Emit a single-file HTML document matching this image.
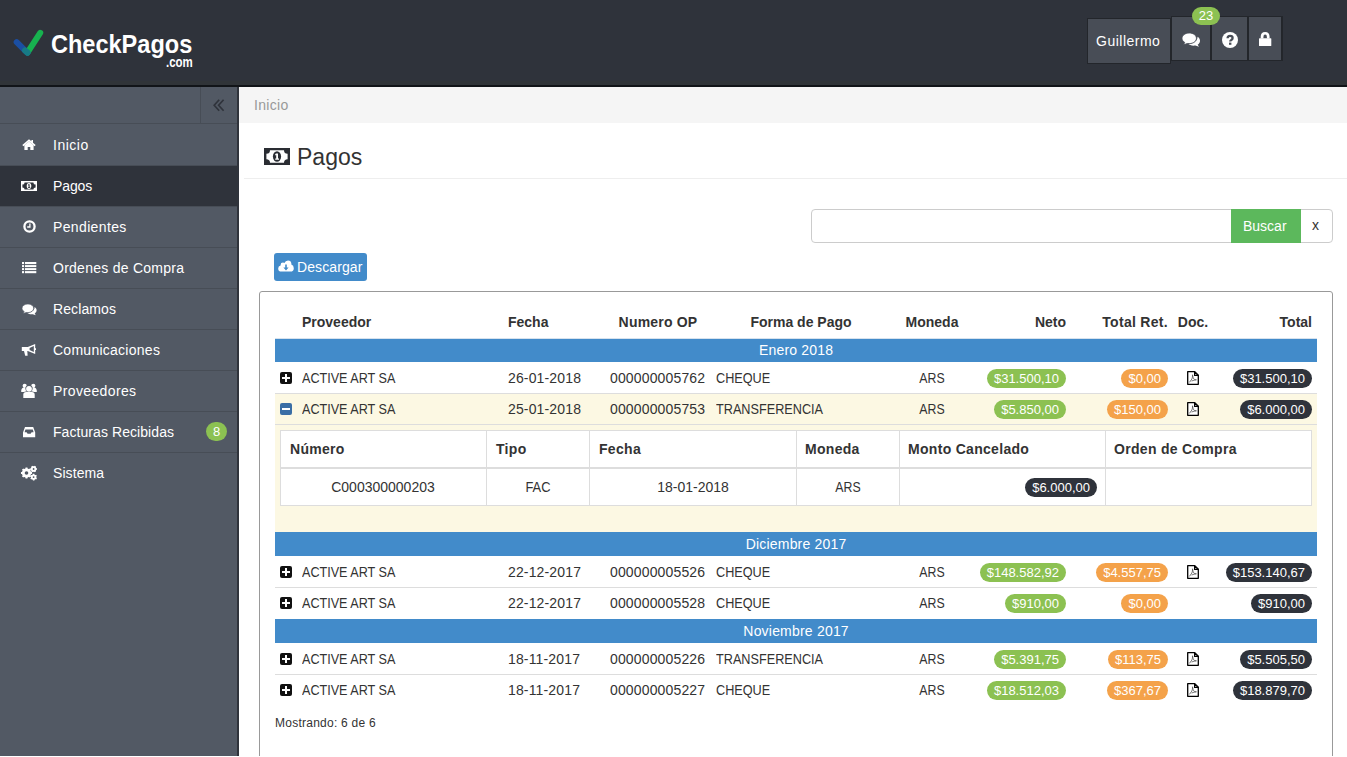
<!DOCTYPE html>
<html><head><meta charset="utf-8"><title>CheckPagos</title>
<style>
*{box-sizing:border-box;margin:0;padding:0}
html,body{width:1347px;height:757px;overflow:hidden;background:#fff;font-family:"Liberation Sans",sans-serif;font-size:14px;color:#333}
.t{position:absolute;white-space:nowrap;line-height:16px}
.b{font-weight:bold}
.bdg{position:absolute;height:19px;border-radius:10px;color:#fff;font-size:13px;line-height:19px;padding:0 7px;white-space:nowrap}
</style></head><body>
<div style="position:absolute;left:0px;top:0px;width:1347px;height:85px;background:#2f333b;"></div>
<div style="position:absolute;left:0px;top:81px;width:1347px;height:4px;background:#303438;"></div>
<div style="position:absolute;left:0px;top:85px;width:1347px;height:2px;background:#111418;"></div>
<svg style="position:absolute;left:10px;top:25px" width="40" height="35" viewBox="0 0 40 35"><line x1="6.7" y1="17.2" x2="17.4" y2="27.8" stroke="#1b4fa3" stroke-width="6" stroke-linecap="round"/><line x1="30.2" y1="7.8" x2="17.6" y2="27.4" stroke="#17b24f" stroke-width="6" stroke-linecap="round"/><line x1="15" y1="25.4" x2="17.5" y2="27.6" stroke="#177a86" stroke-width="6" stroke-linecap="round"/></svg>
<span class="t b" style="left:51px;top:29px;font-size:26px;line-height:30px;color:#fff;transform:scaleX(0.905);transform-origin:0 0">CheckPagos</span>
<span class="t b" style="left:166px;top:55px;font-size:14px;line-height:14px;color:#fff;transform:scaleX(0.82);transform-origin:0 0">.com</span>
<div style="position:absolute;left:1087px;top:18px;width:84px;height:46px;background:#23262b;"></div>
<div style="position:absolute;left:1088px;top:19px;width:82px;height:44px;background:#484d56;"></div>
<span class="t" style="left:1096px;top:33px;color:#fff;letter-spacing:0.5px">Guillermo</span>
<div style="position:absolute;left:1171px;top:16px;width:112px;height:45px;background:#23262b;"></div>
<div style="position:absolute;left:1172px;top:17px;width:38px;height:43px;background:#484d56;"></div>
<div style="position:absolute;left:1212px;top:17px;width:35px;height:43px;background:#484d56;"></div>
<div style="position:absolute;left:1249px;top:17px;width:32px;height:43px;background:#484d56;"></div>
<svg style="position:absolute;left:1182px;top:33px" width="19" height="15" viewBox="0 0 15.4 12.15"><path d="M12.6 3 C13.9 3.8 14.6 5 14.6 6.3 C14.6 7.6 13.9 8.7 12.7 9.5 L13.8 11.2 L10.8 10.2 C10.4 10.3 9.9 10.3 9.4 10.3 C7.5 10.3 5.9 9.7 5 8.8 C9.6 8.6 12.6 6.2 12.6 3Z" fill="#fff"/><path d="M5.9 0 C9.2 0 11.7 1.9 11.7 4.3 C11.7 6.7 9.2 8.6 5.9 8.6 C5.4 8.6 4.9 8.6 4.4 8.5 L1.2 9.6 L2.2 7.6 C0.8 6.8 0 5.6 0 4.3 C0 1.9 2.6 0 5.9 0Z" fill="#fff" stroke="#484d56" stroke-width="0.7"/></svg>
<svg style="position:absolute;left:1221px;top:31px" width="18" height="18" viewBox="0 0 18 18"><circle cx="9" cy="9" r="8" fill="#fff"/><path d="M6.6 7.3 Q6.6 4.8 9.1 4.8 Q11.6 4.8 11.6 6.9 Q11.6 8.1 10.3 8.9 Q9.2 9.5 9.2 10.6" fill="none" stroke="#484d56" stroke-width="2.3"/><rect x="8" y="11.6" width="2.4" height="2.2" fill="#484d56"/></svg>
<svg style="position:absolute;left:1259px;top:32px" width="13" height="15" viewBox="0 0 13 15"><path d="M1.7 6.5 V4.8 Q1.7 0 6.15 0 Q10.6 0 10.6 4.8 V6.5 H7.9 V4.9 Q7.9 2.6 6.15 2.6 Q4.4 2.6 4.4 4.9 V6.5 Z" fill="#fff"/><rect x="0" y="6.2" width="12.3" height="7.8" rx="0.6" fill="#fff"/></svg>
<span class="t" style="left:1192px;top:7px;width:28px;height:18px;border-radius:9px;background:#8cc152;color:#fff;font-size:13px;line-height:18px;text-align:center">23</span>
<div style="position:absolute;left:0px;top:87px;width:237px;height:669px;background:#525964;"></div>
<div style="position:absolute;left:237px;top:87px;width:2px;height:669px;background:#2f333b;"></div>
<div style="position:absolute;left:0px;top:123px;width:237px;height:1px;background:#474d56;"></div>
<div style="position:absolute;left:200px;top:87px;width:1px;height:36px;background:#474d56;"></div>
<svg style="position:absolute;left:213px;top:99px" width="13" height="13" viewBox="0 0 13 13"><path d="M6.2 0.8 L1.2 6.3 L6.2 11.8 M10.6 0.8 L5.6 6.3 L10.6 11.8" fill="none" stroke="#2f333b" stroke-width="1.7"/></svg>
<span class="t" style="left:53px;top:137px;color:#fff;letter-spacing:0.5px">Inicio</span>
<svg style="position:absolute;left:22px;top:139px" width="14" height="11" viewBox="0 0 14 11"><path d="M7 0.3 L0.3 6 L1.4 7.2 L7 2.4 L12.6 7.2 L13.7 6 L11 3.7 V1 H9.4 V2.3 Z" fill="#fff"/><path d="M2.4 6.2 L7 2.6 L11.6 6.2 V11 H8.3 V8 H5.7 V11 H2.4 Z" fill="#fff"/></svg>
<div style="position:absolute;left:0px;top:165px;width:237px;height:1px;background:#474d56;"></div>
<div style="position:absolute;left:0px;top:166px;width:237px;height:40px;background:#2f333b;"></div>
<span class="t" style="left:53px;top:178px;color:#fff;letter-spacing:-0.1px">Pagos</span>
<svg style="position:absolute;left:21px;top:181px" width="16" height="10" viewBox="0 0 16 10"><rect width="16" height="10" fill="#fff"/><path d="M3.6 1.4 H12.4 A2.2 2.2 0 0 0 14.6 3.6 V6.4 A2.2 2.2 0 0 0 12.4 8.6 H3.6 A2.2 2.2 0 0 0 1.4 6.4 V3.6 A2.2 2.2 0 0 0 3.6 1.4Z" fill="#2f333b"/><ellipse cx="8" cy="5" rx="2.3" ry="2.9" fill="#fff"/><path d="M7.4 3.2 H8.6 V6.2 H9.2 V6.9 H7 V6.2 H7.6 V4.2 L7 4.4 V3.8Z" fill="#2f333b"/></svg>
<div style="position:absolute;left:0px;top:206px;width:237px;height:1px;background:#474d56;"></div>
<span class="t" style="left:53px;top:219px;color:#fff;letter-spacing:0.36px">Pendientes</span>
<svg style="position:absolute;left:23px;top:220px" width="13" height="13" viewBox="0 0 13 13"><circle cx="6.5" cy="6.5" r="5.1" fill="none" stroke="#fff" stroke-width="2.3"/><path d="M6.9 3.4 V7 H4.2" fill="none" stroke="#fff" stroke-width="1.3"/></svg>
<div style="position:absolute;left:0px;top:247px;width:237px;height:1px;background:#474d56;"></div>
<span class="t" style="left:53px;top:260px;color:#fff;letter-spacing:0.26px">Ordenes de Compra</span>
<svg style="position:absolute;left:22px;top:262px" width="15" height="12" viewBox="0 0 15 12"><g fill="#fff"><rect x="0" y="0" width="2.1" height="2.1"/><rect x="3" y="0" width="11.3" height="2.1"/><rect x="0" y="3.1" width="2.1" height="2"/><rect x="3" y="3.1" width="11.3" height="2"/><rect x="0" y="6.1" width="2.1" height="2"/><rect x="3" y="6.1" width="11.3" height="2"/><rect x="0" y="9.1" width="2.1" height="2.1"/><rect x="3" y="9.1" width="11.3" height="2.1"/></g></svg>
<div style="position:absolute;left:0px;top:288px;width:237px;height:1px;background:#474d56;"></div>
<span class="t" style="left:53px;top:301px;color:#fff;letter-spacing:0.11px">Reclamos</span>
<svg style="position:absolute;left:22px;top:304px" width="16" height="13" viewBox="0 0 16 13"><path d="M12.6 3 C13.9 3.8 14.6 5 14.6 6.3 C14.6 7.6 13.9 8.7 12.7 9.5 L13.8 11.2 L10.8 10.2 C10.4 10.3 9.9 10.3 9.4 10.3 C7.5 10.3 5.9 9.7 5 8.8 C9.6 8.6 12.6 6.2 12.6 3Z" fill="#fff"/><path d="M5.9 0 C9.2 0 11.7 1.9 11.7 4.3 C11.7 6.7 9.2 8.6 5.9 8.6 C5.4 8.6 4.9 8.6 4.4 8.5 L1.2 9.6 L2.2 7.6 C0.8 6.8 0 5.6 0 4.3 C0 1.9 2.6 0 5.9 0Z" fill="#fff" stroke="#525964" stroke-width="0.7"/></svg>
<div style="position:absolute;left:0px;top:329px;width:237px;height:1px;background:#474d56;"></div>
<span class="t" style="left:53px;top:342px;color:#fff;letter-spacing:0.26px">Comunicaciones</span>
<svg style="position:absolute;left:21px;top:343px" width="16" height="14" viewBox="0 0 16 14"><g fill="#fff"><rect x="0.8" y="4" width="6.2" height="4"/><path d="M3 8 H6.3 L6.6 12.8 H4.2Z"/><path d="M6.8 4 L14.2 1 V11 L6.8 8Z"/><rect x="14" y="5.2" width="1" height="1.8"/></g><path d="M8.6 5 L12.8 3.1 V8.9 L8.6 7Z" fill="#525964"/></svg>
<div style="position:absolute;left:0px;top:370px;width:237px;height:1px;background:#474d56;"></div>
<span class="t" style="left:53px;top:383px;color:#fff;letter-spacing:0.37px">Proveedores</span>
<svg style="position:absolute;left:21px;top:383px" width="16" height="16" viewBox="0 0 16 16"><g fill="#fff"><circle cx="3.7" cy="2.8" r="2.1"/><circle cx="12.3" cy="2.8" r="2.1"/><path d="M0.2 9 Q0 5.2 2.5 4.6 H5 Q6.2 5.4 6 9Z"/><path d="M15.8 9 Q16 5.2 13.5 4.6 H11 Q9.8 5.4 10 9Z"/></g><circle cx="8" cy="5.6" r="3.6" fill="#525964"/><path d="M1.7 15.5 V11.6 Q1.7 8.4 5 8.4 H11 Q14.3 8.4 14.3 11.6 V15.5Z" fill="#525964"/><g fill="#fff"><circle cx="8" cy="5.8" r="2.9"/><path d="M2.3 15 V11.8 Q2.3 9 5.1 9 H10.9 Q13.7 9 13.7 11.8 V15Z"/></g></svg>
<div style="position:absolute;left:0px;top:411px;width:237px;height:1px;background:#474d56;"></div>
<span class="t" style="left:53px;top:424px;color:#fff;letter-spacing:0.07px">Facturas Recibidas</span>
<svg style="position:absolute;left:23px;top:427px" width="13" height="11" viewBox="0 0 13 11"><path d="M2 0 H10.2 L12.2 5.6 V10.3 H0 V5.6Z M2.4 2.6 L1.6 5.2 H3.6 L4.6 6.8 H7.6 L8.6 5.2 H10.6 L9.8 2.6Z" fill="#fff" fill-rule="evenodd"/></svg>
<div style="position:absolute;left:0px;top:452px;width:237px;height:1px;background:#474d56;"></div>
<span class="t" style="left:53px;top:465px;color:#fff;letter-spacing:0.08px">Sistema</span>
<svg style="position:absolute;left:20px;top:465px" width="18" height="16" viewBox="0 0 18 16"><g fill="#fff"><path d="M10.67 6.94 L12.02 7.04 L12.02 8.96 L10.67 9.06 L10.19 10.20 L11.08 11.22 L9.72 12.58 L8.70 11.69 L7.56 12.17 L7.46 13.52 L5.54 13.52 L5.44 12.17 L4.30 11.69 L3.28 12.58 L1.92 11.22 L2.81 10.20 L2.33 9.06 L0.98 8.96 L0.98 7.04 L2.33 6.94 L2.81 5.80 L1.92 4.78 L3.28 3.42 L4.30 4.31 L5.44 3.83 L5.54 2.48 L7.46 2.48 L7.56 3.83 L8.70 4.31 L9.72 3.42 L11.08 4.78 L10.19 5.80Z"/><circle cx="6.5" cy="8" r="4.5"/><path d="M15.96 3.19 L17.01 3.20 L17.01 4.80 L15.96 4.81 L15.49 5.64 L16.00 6.55 L14.61 7.35 L14.08 6.45 L13.12 6.45 L12.59 7.35 L11.20 6.55 L11.71 5.64 L11.24 4.81 L10.19 4.80 L10.19 3.20 L11.24 3.19 L11.71 2.36 L11.20 1.45 L12.59 0.65 L13.12 1.55 L14.08 1.55 L14.61 0.65 L16.00 1.45 L15.49 2.36Z"/><circle cx="13.6" cy="4" r="2.7"/><path d="M16.06 12.52 L16.97 13.03 L16.21 14.44 L15.29 13.95 L14.47 14.44 L14.48 15.49 L12.88 15.53 L12.84 14.48 L12.00 14.02 L11.11 14.56 L10.27 13.19 L11.16 12.64 L11.14 11.68 L10.23 11.17 L10.99 9.76 L11.91 10.25 L12.73 9.76 L12.72 8.71 L14.32 8.67 L14.36 9.72 L15.20 10.18 L16.09 9.64 L16.93 11.01 L16.04 11.56Z"/><circle cx="13.6" cy="12.1" r="2.7"/></g><g fill="#525964"><circle cx="6.5" cy="8" r="1.8"/><circle cx="13.6" cy="4" r="0.9"/><circle cx="13.6" cy="12.1" r="0.9"/></g></svg>
<span class="t" style="left:206px;top:422px;width:21px;height:19px;border-radius:10px;background:#8cc152;color:#fff;font-size:13px;line-height:19px;text-align:center">8</span>
<div style="position:absolute;left:239px;top:87px;width:1108px;height:36px;background:#f5f5f5;"></div>
<span class="t" style="left:254px;top:97px;color:#999;letter-spacing:0.3px">Inicio</span>
<svg style="position:absolute;left:264px;top:148px" width="26" height="17" viewBox="0 0 26 17"><rect width="26" height="17" fill="#2a2d33"/><path d="M6 2.2 H20 A3.6 3.6 0 0 0 23.6 5.8 V11.2 A3.6 3.6 0 0 0 20 14.8 H6 A3.6 3.6 0 0 0 2.4 11.2 V5.8 A3.6 3.6 0 0 0 6 2.2Z" fill="#fff"/><ellipse cx="13" cy="8.5" rx="4.1" ry="5.2" fill="#2a2d33"/><path d="M12 5.4 H14 V10.6 H15 V11.8 H11.2 V10.6 H12.2 V7 L11.2 7.4 V6.3Z" fill="#fff"/></svg>
<span class="t" style="left:297px;top:142px;font-size:23px;line-height:30px;color:#333">Pagos</span>
<div style="position:absolute;left:244px;top:178px;width:1103px;height:1px;background:#eee;"></div>
<div style="position:absolute;left:811px;top:209px;width:522px;height:34px;border:1px solid #ccc;border-radius:4px;background:#fff"></div>
<div style="position:absolute;left:1231px;top:209px;width:70px;height:34px;background:#5cb85c;"></div>
<span class="t" style="left:1243px;top:218px;color:#fff;letter-spacing:0px">Buscar</span>
<span class="t" style="left:1312px;top:217px;color:#333">x</span>
<div style="position:absolute;left:274px;top:253px;width:93px;height:28px;border-radius:3px;background:#428bca"></div>
<svg style="position:absolute;left:278px;top:260px" width="16" height="12" viewBox="0 0 16 12"><path d="M3.6 11.6 Q0.2 11.6 0.2 8.4 Q0.2 6 2.6 5.4 Q2.6 5.2 2.6 5 Q2.6 2.6 5 2.6 Q5.8 2.6 6.4 3 Q7.4 0.4 10 0.4 Q13.2 0.4 13.4 3.8 Q13.4 4.2 13.3 4.6 Q15.8 5.3 15.8 8.2 Q15.8 11.6 12.4 11.6Z" fill="#fff"/><path d="M7.2 4.6 H8.8 V7.6 H10.6 L8 10.4 L5.4 7.6 H7.2Z" fill="#428bca"/></svg>
<span class="t" style="left:297px;top:259px;color:#fff;letter-spacing:0.1px">Descargar</span>
<div style="position:absolute;left:259px;top:291px;width:1074px;height:500px;border:1px solid #999;border-radius:3px"></div>
<span class="t" style="left:302px;top:314px;font-weight:bold;color:#333;letter-spacing:0px">Proveedor</span>
<span class="t" style="left:508px;top:314px;font-weight:bold;color:#333;letter-spacing:0px">Fecha</span>
<span class="t" style="left:558px;top:314px;width:200px;text-align:center;font-weight:bold;color:#333;letter-spacing:0.2px">Numero OP</span>
<span class="t" style="left:701px;top:314px;width:200px;text-align:center;font-weight:bold;color:#333;letter-spacing:0px">Forma de Pago</span>
<span class="t" style="left:832px;top:314px;width:200px;text-align:center;font-weight:bold;color:#333;letter-spacing:0px">Moneda</span>
<span class="t" style="right:281px;top:314px;font-weight:bold;color:#333;letter-spacing:0px">Neto</span>
<span class="t" style="right:179px;top:314px;font-weight:bold;color:#333;letter-spacing:0.3px">Total Ret.</span>
<span class="t" style="left:1093px;top:314px;width:200px;text-align:center;font-weight:bold;color:#333;letter-spacing:0px">Doc.</span>
<span class="t" style="right:35px;top:314px;font-weight:bold;color:#333;letter-spacing:0px">Total</span>
<div style="position:absolute;left:275px;top:338px;width:1042px;height:1px;background:#d6e2ee;"></div>
<div style="position:absolute;left:275px;top:339px;width:1042px;height:23px;background:#428bca;"></div>
<span class="t" style="left:275px;top:342px;width:1042px;text-align:center;color:#fff;letter-spacing:0.2px;text-indent:0.2px">Enero 2018</span>
<div style="position:absolute;left:280px;top:372px;width:12px;height:12px;border-radius:2px;background:#111"></div>
<div style="position:absolute;left:282px;top:377px;width:8px;height:2px;background:#fff;"></div>
<div style="position:absolute;left:285px;top:374px;width:2px;height:8px;background:#fff;"></div>
<span class="t" style="left:302px;top:370px;transform:scaleX(0.9);transform-origin:0 0">ACTIVE ART SA</span>
<span class="t" style="left:508px;top:370px;letter-spacing:0.15px">26-01-2018</span>
<span class="t" style="left:610px;top:370px;letter-spacing:0.15px">000000005762</span>
<span class="t" style="left:716px;top:370px;transform:scaleX(0.905);transform-origin:0 0">CHEQUE</span>
<span class="t" style="left:832px;top:370px;width:200px;text-align:center;transform:scaleX(0.88)">ARS</span>
<span class="bdg" style="right:281px;top:369px;background:#8cc152">$31.500,10</span>
<span class="bdg" style="right:179px;top:369px;background:#f4a24a">$0,00</span>
<span class="bdg" style="right:35px;top:369px;background:#2f333b">$31.500,10</span>
<svg style="position:absolute;left:1187px;top:371px" width="13" height="15" viewBox="0 0 13 15"><path d="M0.7 0.7 H7.7 L11.3 4.3 V13.3 H0.7Z" fill="#fff" stroke="#000" stroke-width="1.3" stroke-linejoin="round"/><path d="M7.6 0.8 V4.4 H11.2Z" fill="#fff" stroke="#000" stroke-width="1.2" stroke-linejoin="round"/><path d="M2.4 11.4 L4.9 8 Q5.7 6.4 5.5 3.8 Q5.9 6.6 6.7 7.8 Q7.6 9 9.4 8.8 Q7.2 9 4.6 10" fill="none" stroke="#555" stroke-width="0.8"/></svg>
<div style="position:absolute;left:275px;top:393px;width:1042px;height:1px;background:#ddd;"></div>
<div style="position:absolute;left:275px;top:394px;width:1042px;height:30px;background:#fcf8e3;"></div>
<div style="position:absolute;left:280px;top:403px;width:12px;height:12px;border-radius:2px;background:#3a6ea5"></div>
<div style="position:absolute;left:282px;top:408px;width:8px;height:2px;background:#fff;"></div>
<span class="t" style="left:302px;top:401px;transform:scaleX(0.9);transform-origin:0 0">ACTIVE ART SA</span>
<span class="t" style="left:508px;top:401px;letter-spacing:0.15px">25-01-2018</span>
<span class="t" style="left:610px;top:401px;letter-spacing:0.15px">000000005753</span>
<span class="t" style="left:716px;top:401px;transform:scaleX(0.905);transform-origin:0 0">TRANSFERENCIA</span>
<span class="t" style="left:832px;top:401px;width:200px;text-align:center;transform:scaleX(0.88)">ARS</span>
<span class="bdg" style="right:281px;top:400px;background:#8cc152">$5.850,00</span>
<span class="bdg" style="right:179px;top:400px;background:#f4a24a">$150,00</span>
<span class="bdg" style="right:35px;top:400px;background:#2f333b">$6.000,00</span>
<svg style="position:absolute;left:1187px;top:402px" width="13" height="15" viewBox="0 0 13 15"><path d="M0.7 0.7 H7.7 L11.3 4.3 V13.3 H0.7Z" fill="#fff" stroke="#000" stroke-width="1.3" stroke-linejoin="round"/><path d="M7.6 0.8 V4.4 H11.2Z" fill="#fff" stroke="#000" stroke-width="1.2" stroke-linejoin="round"/><path d="M2.4 11.4 L4.9 8 Q5.7 6.4 5.5 3.8 Q5.9 6.6 6.7 7.8 Q7.6 9 9.4 8.8 Q7.2 9 4.6 10" fill="none" stroke="#555" stroke-width="0.8"/></svg>
<div style="position:absolute;left:275px;top:424px;width:1042px;height:1px;background:#ddd;"></div>
<div style="position:absolute;left:275px;top:425px;width:1042px;height:107px;background:#fcf8e3;"></div>
<div style="position:absolute;left:280px;top:430px;width:1032px;height:76px;background:#ddd;"></div>
<div style="position:absolute;left:281px;top:431px;width:1030px;height:36px;background:#fff;"></div>
<div style="position:absolute;left:281px;top:469px;width:1030px;height:36px;background:#fff;"></div>
<div style="position:absolute;left:486px;top:431px;width:1px;height:74px;background:#ddd;"></div>
<div style="position:absolute;left:589px;top:431px;width:1px;height:74px;background:#ddd;"></div>
<div style="position:absolute;left:796px;top:431px;width:1px;height:74px;background:#ddd;"></div>
<div style="position:absolute;left:899px;top:431px;width:1px;height:74px;background:#ddd;"></div>
<div style="position:absolute;left:1105px;top:431px;width:1px;height:74px;background:#ddd;"></div>
<span class="t" style="left:290px;top:441px;font-weight:bold;letter-spacing:0.3px">N&uacute;mero</span>
<span class="t" style="left:496px;top:441px;font-weight:bold;letter-spacing:0.3px">Tipo</span>
<span class="t" style="left:599px;top:441px;font-weight:bold;letter-spacing:0.3px">Fecha</span>
<span class="t" style="left:805px;top:441px;font-weight:bold;letter-spacing:0.3px">Moneda</span>
<span class="t" style="left:908px;top:441px;font-weight:bold;letter-spacing:0.3px">Monto Cancelado</span>
<span class="t" style="left:1114px;top:441px;font-weight:bold;letter-spacing:0.3px">Orden de Compra</span>
<span class="t" style="left:283px;top:479px;width:200px;text-align:center;">C000300000203</span>
<span class="t" style="left:438px;top:479px;width:200px;text-align:center;transform:scaleX(0.92)">FAC</span>
<span class="t" style="left:593px;top:479px;width:200px;text-align:center;">18-01-2018</span>
<span class="t" style="left:748px;top:479px;width:200px;text-align:center;transform:scaleX(0.88)">ARS</span>
<span class="bdg" style="right:250px;top:478px;background:#2f333b">$6.000,00</span>
<div style="position:absolute;left:275px;top:532px;width:1042px;height:24px;background:#428bca;"></div>
<span class="t" style="left:275px;top:536px;width:1042px;text-align:center;color:#fff;letter-spacing:0.2px;text-indent:0.2px">Diciembre 2017</span>
<div style="position:absolute;left:280px;top:566px;width:12px;height:12px;border-radius:2px;background:#111"></div>
<div style="position:absolute;left:282px;top:571px;width:8px;height:2px;background:#fff;"></div>
<div style="position:absolute;left:285px;top:568px;width:2px;height:8px;background:#fff;"></div>
<span class="t" style="left:302px;top:564px;transform:scaleX(0.9);transform-origin:0 0">ACTIVE ART SA</span>
<span class="t" style="left:508px;top:564px;letter-spacing:0.15px">22-12-2017</span>
<span class="t" style="left:610px;top:564px;letter-spacing:0.15px">000000005526</span>
<span class="t" style="left:716px;top:564px;transform:scaleX(0.905);transform-origin:0 0">CHEQUE</span>
<span class="t" style="left:832px;top:564px;width:200px;text-align:center;transform:scaleX(0.88)">ARS</span>
<span class="bdg" style="right:281px;top:563px;background:#8cc152">$148.582,92</span>
<span class="bdg" style="right:179px;top:563px;background:#f4a24a">$4.557,75</span>
<span class="bdg" style="right:35px;top:563px;background:#2f333b">$153.140,67</span>
<svg style="position:absolute;left:1187px;top:565px" width="13" height="15" viewBox="0 0 13 15"><path d="M0.7 0.7 H7.7 L11.3 4.3 V13.3 H0.7Z" fill="#fff" stroke="#000" stroke-width="1.3" stroke-linejoin="round"/><path d="M7.6 0.8 V4.4 H11.2Z" fill="#fff" stroke="#000" stroke-width="1.2" stroke-linejoin="round"/><path d="M2.4 11.4 L4.9 8 Q5.7 6.4 5.5 3.8 Q5.9 6.6 6.7 7.8 Q7.6 9 9.4 8.8 Q7.2 9 4.6 10" fill="none" stroke="#555" stroke-width="0.8"/></svg>
<div style="position:absolute;left:275px;top:587px;width:1042px;height:1px;background:#ddd;"></div>
<div style="position:absolute;left:280px;top:597px;width:12px;height:12px;border-radius:2px;background:#111"></div>
<div style="position:absolute;left:282px;top:602px;width:8px;height:2px;background:#fff;"></div>
<div style="position:absolute;left:285px;top:599px;width:2px;height:8px;background:#fff;"></div>
<span class="t" style="left:302px;top:595px;transform:scaleX(0.9);transform-origin:0 0">ACTIVE ART SA</span>
<span class="t" style="left:508px;top:595px;letter-spacing:0.15px">22-12-2017</span>
<span class="t" style="left:610px;top:595px;letter-spacing:0.15px">000000005528</span>
<span class="t" style="left:716px;top:595px;transform:scaleX(0.905);transform-origin:0 0">CHEQUE</span>
<span class="t" style="left:832px;top:595px;width:200px;text-align:center;transform:scaleX(0.88)">ARS</span>
<span class="bdg" style="right:281px;top:594px;background:#8cc152">$910,00</span>
<span class="bdg" style="right:179px;top:594px;background:#f4a24a">$0,00</span>
<span class="bdg" style="right:35px;top:594px;background:#2f333b">$910,00</span>
<div style="position:absolute;left:275px;top:619px;width:1042px;height:24px;background:#428bca;"></div>
<span class="t" style="left:275px;top:623px;width:1042px;text-align:center;color:#fff;letter-spacing:0.2px;text-indent:0.2px">Noviembre 2017</span>
<div style="position:absolute;left:280px;top:653px;width:12px;height:12px;border-radius:2px;background:#111"></div>
<div style="position:absolute;left:282px;top:658px;width:8px;height:2px;background:#fff;"></div>
<div style="position:absolute;left:285px;top:655px;width:2px;height:8px;background:#fff;"></div>
<span class="t" style="left:302px;top:651px;transform:scaleX(0.9);transform-origin:0 0">ACTIVE ART SA</span>
<span class="t" style="left:508px;top:651px;letter-spacing:0.15px">18-11-2017</span>
<span class="t" style="left:610px;top:651px;letter-spacing:0.15px">000000005226</span>
<span class="t" style="left:716px;top:651px;transform:scaleX(0.905);transform-origin:0 0">TRANSFERENCIA</span>
<span class="t" style="left:832px;top:651px;width:200px;text-align:center;transform:scaleX(0.88)">ARS</span>
<span class="bdg" style="right:281px;top:650px;background:#8cc152">$5.391,75</span>
<span class="bdg" style="right:179px;top:650px;background:#f4a24a">$113,75</span>
<span class="bdg" style="right:35px;top:650px;background:#2f333b">$5.505,50</span>
<svg style="position:absolute;left:1187px;top:652px" width="13" height="15" viewBox="0 0 13 15"><path d="M0.7 0.7 H7.7 L11.3 4.3 V13.3 H0.7Z" fill="#fff" stroke="#000" stroke-width="1.3" stroke-linejoin="round"/><path d="M7.6 0.8 V4.4 H11.2Z" fill="#fff" stroke="#000" stroke-width="1.2" stroke-linejoin="round"/><path d="M2.4 11.4 L4.9 8 Q5.7 6.4 5.5 3.8 Q5.9 6.6 6.7 7.8 Q7.6 9 9.4 8.8 Q7.2 9 4.6 10" fill="none" stroke="#555" stroke-width="0.8"/></svg>
<div style="position:absolute;left:275px;top:674px;width:1042px;height:1px;background:#ddd;"></div>
<div style="position:absolute;left:280px;top:684px;width:12px;height:12px;border-radius:2px;background:#111"></div>
<div style="position:absolute;left:282px;top:689px;width:8px;height:2px;background:#fff;"></div>
<div style="position:absolute;left:285px;top:686px;width:2px;height:8px;background:#fff;"></div>
<span class="t" style="left:302px;top:682px;transform:scaleX(0.9);transform-origin:0 0">ACTIVE ART SA</span>
<span class="t" style="left:508px;top:682px;letter-spacing:0.15px">18-11-2017</span>
<span class="t" style="left:610px;top:682px;letter-spacing:0.15px">000000005227</span>
<span class="t" style="left:716px;top:682px;transform:scaleX(0.905);transform-origin:0 0">CHEQUE</span>
<span class="t" style="left:832px;top:682px;width:200px;text-align:center;transform:scaleX(0.88)">ARS</span>
<span class="bdg" style="right:281px;top:681px;background:#8cc152">$18.512,03</span>
<span class="bdg" style="right:179px;top:681px;background:#f4a24a">$367,67</span>
<span class="bdg" style="right:35px;top:681px;background:#2f333b">$18.879,70</span>
<svg style="position:absolute;left:1187px;top:683px" width="13" height="15" viewBox="0 0 13 15"><path d="M0.7 0.7 H7.7 L11.3 4.3 V13.3 H0.7Z" fill="#fff" stroke="#000" stroke-width="1.3" stroke-linejoin="round"/><path d="M7.6 0.8 V4.4 H11.2Z" fill="#fff" stroke="#000" stroke-width="1.2" stroke-linejoin="round"/><path d="M2.4 11.4 L4.9 8 Q5.7 6.4 5.5 3.8 Q5.9 6.6 6.7 7.8 Q7.6 9 9.4 8.8 Q7.2 9 4.6 10" fill="none" stroke="#555" stroke-width="0.8"/></svg>
<span class="t" style="left:275px;top:715px;font-size:12px;color:#333;letter-spacing:0.25px">Mostrando: 6 de 6</span>
<div style="position:absolute;left:0px;top:756px;width:1347px;height:1px;background:#fff;"></div>
</body></html>
